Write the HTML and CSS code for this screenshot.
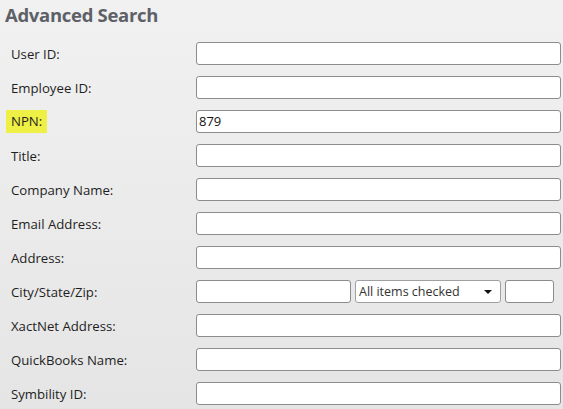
FILE: index.html
```html
<!DOCTYPE html>
<html>
<head>
<meta charset="utf-8">
<link rel="stylesheet" href="styles.css">
</head>
<body>
<div class="page">
  <h1 class="title">Advanced Search</h1>
  <div class="form">
    <label class="lbl">User ID:</label><div class="field"></div>
    <label class="lbl">Employee ID:</label><div class="field"></div>
    <label class="lbl"><span class="hl">NPN:</span></label><div class="field">879</div>
    <label class="lbl">Title:</label><div class="field"></div>
    <label class="lbl">Company Name:</label><div class="field"></div>
    <label class="lbl">Email Address:</label><div class="field"></div>
    <label class="lbl">Address:</label><div class="field"></div>
    <label class="lbl">City/State/Zip:</label>
    <div class="csz">
      <div class="field city"></div>
      <div class="field select"><span>All items checked</span><span class="arrow"></span></div>
      <div class="field zip"></div>
    </div>
    <label class="lbl">XactNet Address:</label><div class="field"></div>
    <label class="lbl">QuickBooks Name:</label><div class="field"></div>
    <label class="lbl">Symbility ID:</label><div class="field"></div>
  </div>
</div>
</body>
</html>
```
FILE: styles.css
```css
html, body {
  margin: 0;
  padding: 0;
}
body {
  width: 563px;
  height: 409px;
  overflow: hidden;
  background: linear-gradient(#f1f1f1, #e5e5e5);
  font-family: "Open Sans", "Noto Sans", sans-serif;
}
.page {
  padding: 0;
}
.title {
  margin: 0;
  padding: 0 0 0 5px;
  height: 31px;
  line-height: 30px;
  font-size: 18.5px;
  font-weight: 700;
  color: #5d6167;
  letter-spacing: -0.3px;
}
.form {
  display: grid;
  grid-template-columns: 185px 365px;
  grid-auto-rows: 23px;
  row-gap: 11px;
  padding-left: 11px;
  margin-top: 11px;
}
.lbl {
  display: flex;
  align-items: center;
  font-size: 13.2px;
  color: #1e1e1e;
}
.hl {
  background: #eff046;
  margin-left: -5px;
  padding: 0 5px;
  line-height: 23px;
  height: 23px;
}
.field {
  box-sizing: border-box;
  height: 23px;
  background: #fff;
  border: 1px solid #8c8c8c;
  border-radius: 3px;
  font-size: 13px;
  line-height: 21px;
  padding-left: 2px;
  color: #111;
}
.csz {
  display: flex;
  gap: 4px;
}
.city {
  width: 155px;
}
.select {
  width: 146px;
  display: flex;
  align-items: center;
  justify-content: space-between;
  padding: 0 8px 0 3px;
  color: #333;
  font-size: 12.5px;
  border-color: #a0a0a0;
}
.arrow {
  width: 0;
  height: 0;
  border-left: 4px solid transparent;
  border-right: 4px solid transparent;
  border-top: 4px solid #111;
}
.zip {
  width: 49px;
}
```
